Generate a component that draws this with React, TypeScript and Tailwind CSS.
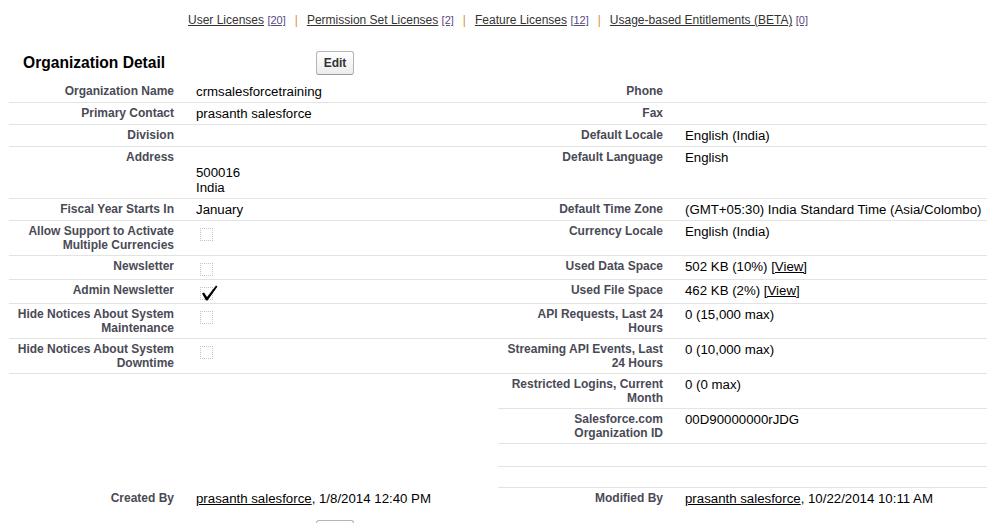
import React from "react";

const font = "font-['Liberation_Sans',Arial,Helvetica,sans-serif]";

const labelCls =
  "pt-[3px] pb-[3px] pl-[2px] pr-[10px] text-right align-top font-bold text-[12px] leading-[14px] text-[#4a4a56] whitespace-nowrap";
const dataCls =
  "pt-[3px] pb-[3px] pl-[12px] align-top text-[13.25px] leading-[15px] text-black whitespace-nowrap";
const line = "border-b border-[#e3e3e3]";

function Checkbox({ checked }: { checked?: boolean }) {
  return (
    <div className="h-[17px] pt-[4px] pl-[4px]">
      <div className="relative w-[13px] h-[13px] border border-dotted border-[#c4c4c4]">
        {checked && (
          <svg
            className="absolute -left-[1px] -top-[4px]"
            width="19"
            height="18"
            viewBox="0 0 19 18"
          >
            <path
              d="M2 9.5 L4 8.5 L7 13 L16 1.5 L17.5 2.5 L7.5 16.5 L6 16.5 Z"
              fill="#000"
            />
          </svg>
        )}
      </div>
    </div>
  );
}

function Row({
  l1,
  d1,
  l2,
  d2,
  leftLine = true,
  rightLine = true,
  h,
}: {
  l1?: React.ReactNode;
  d1?: React.ReactNode;
  l2?: React.ReactNode;
  d2?: React.ReactNode;
  leftLine?: boolean;
  rightLine?: boolean;
  h?: string;
}) {
  return (
    <tr className={h}>
      <td className={`${labelCls} ${leftLine ? line : ""}`}>{l1}</td>
      <td className={`${dataCls} ${leftLine ? line : ""}`}>{d1}</td>
      <td className={`${labelCls} ${rightLine ? line : ""}`}>{l2}</td>
      <td className={`${dataCls} ${rightLine ? line : ""}`}>{d2}</td>
    </tr>
  );
}

function TopLink({ text, count, last }: { text: string; count: string; last?: boolean }) {
  return (
    <>
      <a className="underline text-[#333]">{text}</a>{" "}
      <a className="underline text-[11px] text-[#5b4a82]">{count}</a>
      {!last && <span className="mx-[9px] text-[#d4952a]">|</span>}
    </>
  );
}

function EditButton() {
  return (
    <button className="h-[24px] w-[38px] border border-[#b5b5b5] border-b-[#9a9a9a] rounded-[3px] bg-linear-to-b from-white to-[#ececec] text-[12px] font-bold text-[#333]">
      Edit
    </button>
  );
}

export default function App() {
  return (
    <div className={`${font} bg-white w-[991px] h-[523px] overflow-hidden`}>
      <div className="pt-[13px] pl-[5px] text-center text-[12px] leading-[15px]">
        <TopLink text="User Licenses" count="[20]" />
        <TopLink text="Permission Set Licenses" count="[2]" />
        <TopLink text="Feature Licenses" count="[12]" />
        <TopLink text="Usage-based Entitlements (BETA)" count="[0]" last />
      </div>

      <div className="flex items-center h-[24px] mt-[23px] mb-[6px] ml-[9px]">
        <h2 className="w-[307px] pl-[14px] text-[15.6px] font-bold text-black">
          Organization Detail
        </h2>
        <EditButton />
      </div>

      <table className="ml-[9px] w-[978px] table-fixed border-collapse">
        <colgroup>
          <col className="w-[175px]" />
          <col className="w-[314px]" />
          <col className="w-[175px]" />
          <col className="w-[314px]" />
        </colgroup>
        <tbody>
          <Row l1="Organization Name" d1="crmsalesforcetraining" l2="Phone" />
          <Row l1="Primary Contact" d1="prasanth salesforce" l2="Fax" />
          <Row l1="Division" l2="Default Locale" d2="English (India)" />
          <Row
            l1="Address"
            d1={
              <>
                <br />
                500016
                <br />
                India
              </>
            }
            l2="Default Language"
            d2="English"
          />
          <Row
            l1="Fiscal Year Starts In"
            d1="January"
            l2="Default Time Zone"
            d2="(GMT+05:30) India Standard Time (Asia/Colombo)"
          />
          <Row
            l1={
              <>
                Allow Support to Activate
                <br />
                Multiple Currencies
              </>
            }
            d1={<Checkbox />}
            l2="Currency Locale"
            d2="English (India)"
          />
          <Row
            l1="Newsletter"
            d1={<Checkbox />}
            l2="Used Data Space"
            d2={
              <>
                502 KB (10%) <a className="underline">[View]</a>
              </>
            }
          />
          <Row
            l1="Admin Newsletter"
            d1={<Checkbox checked />}
            l2="Used File Space"
            d2={
              <>
                462 KB (2%) <a className="underline">[View]</a>
              </>
            }
          />
          <Row
            l1={
              <>
                Hide Notices About System
                <br />
                Maintenance
              </>
            }
            d1={<Checkbox />}
            l2={
              <>
                API Requests, Last 24
                <br />
                Hours
              </>
            }
            d2="0 (15,000 max)"
          />
          <Row
            l1={
              <>
                Hide Notices About System
                <br />
                Downtime
              </>
            }
            d1={<Checkbox />}
            l2={
              <>
                Streaming API Events, Last
                <br />
                24 Hours
              </>
            }
            d2="0 (10,000 max)"
          />
          <Row
            leftLine={false}
            l2={
              <>
                Restricted Logins, Current
                <br />
                Month
              </>
            }
            d2="0 (0 max)"
          />
          <Row
            leftLine={false}
            l2={
              <>
                Salesforce.com
                <br />
                Organization ID
              </>
            }
            d2="00D90000000rJDG"
          />
          <Row leftLine={false} h="h-[23px]" />
          <Row leftLine={false} h="h-[21px]" />
          <Row
            leftLine={false}
            rightLine={false}
            l1="Created By"
            d1={
              <>
                <a className="underline">prasanth salesforce</a>, 1/8/2014 12:40 PM
              </>
            }
            l2="Modified By"
            d2={
              <>
                <a className="underline">prasanth salesforce</a>, 10/22/2014 10:11 AM
              </>
            }
          />
        </tbody>
      </table>

      <div className="mt-[10px] ml-[316px]">
        <EditButton />
      </div>
    </div>
  );
}
